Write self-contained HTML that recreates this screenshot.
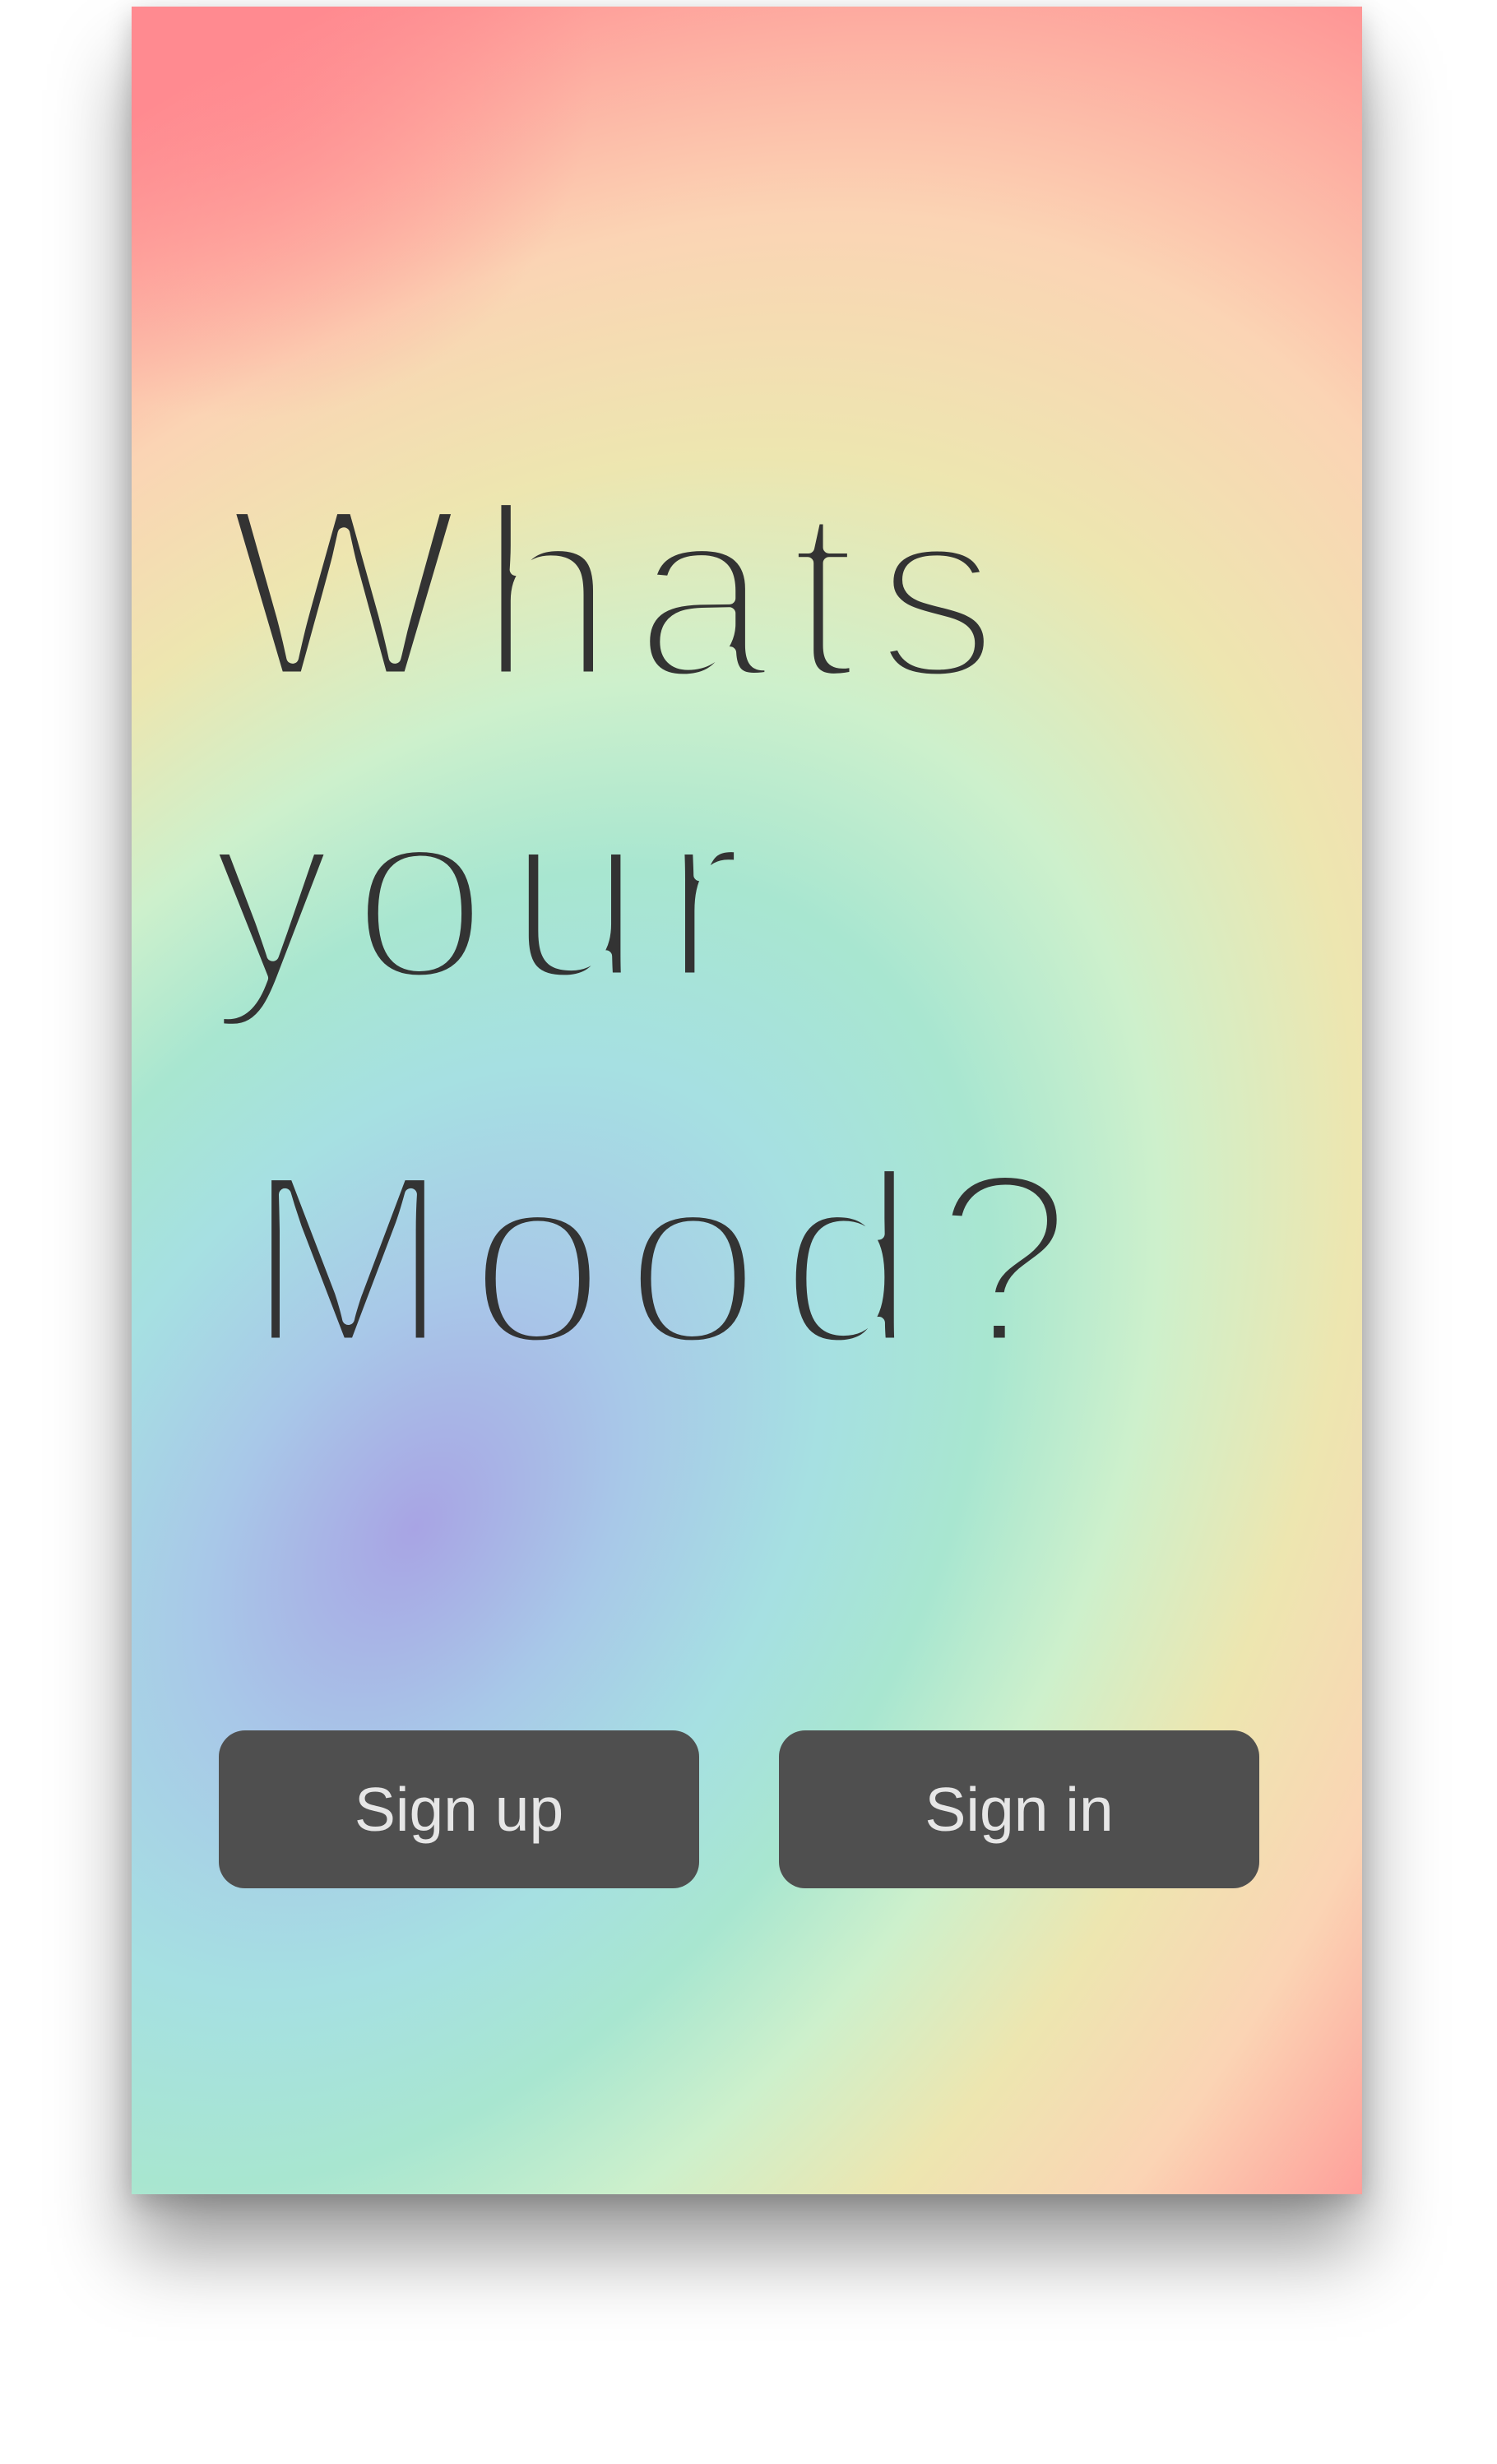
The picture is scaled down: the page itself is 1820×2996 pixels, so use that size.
<!DOCTYPE html>
<html><head><meta charset="utf-8"><style>
html,body{margin:0;padding:0;background:#fff;width:1820px;height:2996px;overflow:hidden}
.shadow{position:absolute;left:160px;top:8px;width:1496px;height:2660px;box-shadow:0 70px 90px rgba(0,0,0,.38),0 10px 30px rgba(0,0,0,.2);background:#ccc}
svg{position:absolute;left:0;top:0}
.btn{position:absolute;top:2104px;height:192px;width:584px;background:#4f4f4f;border-radius:32px;color:#e6e6e6;font-family:"Liberation Sans",sans-serif;font-size:75px;text-align:center;line-height:192px}
</style></head><body>
<div class="shadow"></div>
<svg width="1820" height="2996" viewBox="0 0 1820 2996">
<defs>
<radialGradient id="g" gradientUnits="userSpaceOnUse" cx="505" cy="1858" r="1550" gradientTransform="translate(505 1858) rotate(35) scale(1 1.5) translate(-505 -1858)">
<stop offset="0" stop-color="#a8a4e4"/>
<stop offset="0.14" stop-color="#a8c8e8"/>
<stop offset="0.27" stop-color="#a6e0e2"/>
<stop offset="0.38" stop-color="#a8e6d0"/>
<stop offset="0.49" stop-color="#cdf0cc"/>
<stop offset="0.62" stop-color="#ede6b0"/>
<stop offset="0.76" stop-color="#fbd4b4"/>
<stop offset="0.97" stop-color="#ff8a90"/>
</radialGradient>
<radialGradient id="tl" gradientUnits="userSpaceOnUse" cx="300" cy="90" r="420">
<stop offset="0" stop-color="#ff8a90" stop-opacity="0.8"/>
<stop offset="1" stop-color="#ff8a90" stop-opacity="0"/>
</radialGradient>
</defs>
<rect x="160" y="8" width="1496" height="2660" fill="url(#g)"/>
<rect x="160" y="8" width="1496" height="2660" fill="url(#tl)"/>
<g font-family="Liberation Sans, sans-serif" font-size="300" fill="#333" stroke="url(#g)" stroke-width="15" stroke-linejoin="round" letter-spacing="22">
<text x="276" y="824">Whats</text>
<text x="255" y="1190">your</text>
<text x="298" y="1634">Mood?</text>
</g>
</svg>
<div class="btn" style="left:266px">Sign up</div>
<div class="btn" style="left:947px">Sign in</div>
</body></html>
